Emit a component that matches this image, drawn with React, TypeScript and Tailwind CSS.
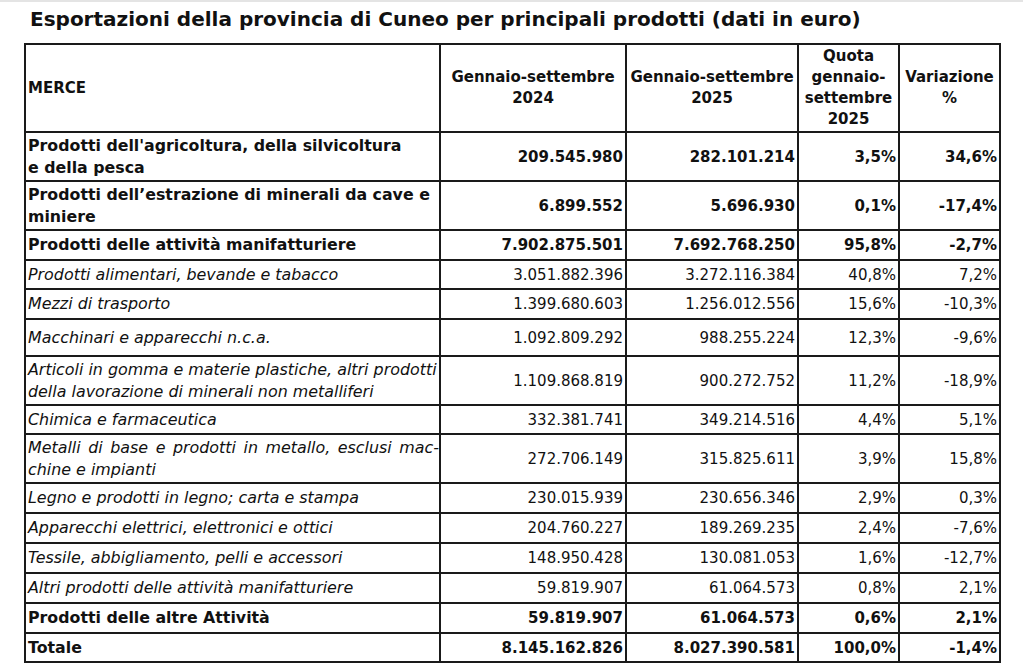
import React from 'react';

type Row = {
  label: React.ReactNode;
  a: string;
  b: string;
  q: string;
  v: string;
  kind: 'bold' | 'italic';
  h: string;
  justify?: boolean;
};

const rows: Row[] = [
  {
    label: (
      <>
        Prodotti dell'agricoltura, della silvicoltura
        <br />e della pesca
      </>
    ),
    a: '209.545.980',
    b: '282.101.214',
    q: '3,5%',
    v: '34,6%',
    kind: 'bold',
    h: 'h-[49px]',
  },
  {
    label: 'Prodotti dell’estrazione di minerali da cave e miniere',
    a: '6.899.552',
    b: '5.696.930',
    q: '0,1%',
    v: '-17,4%',
    kind: 'bold',
    h: 'h-[49px]',
  },
  { label: 'Prodotti delle attività manifatturiere', a: '7.902.875.501', b: '7.692.768.250', q: '95,8%', v: '-2,7%', kind: 'bold', h: 'h-[30px]' },
  { label: 'Prodotti alimentari, bevande e tabacco', a: '3.051.882.396', b: '3.272.116.384', q: '40,8%', v: '7,2%', kind: 'italic', h: 'h-[29px]' },
  { label: 'Mezzi di trasporto', a: '1.399.680.603', b: '1.256.012.556', q: '15,6%', v: '-10,3%', kind: 'italic', h: 'h-[30px]' },
  { label: 'Macchinari e apparecchi n.c.a.', a: '1.092.809.292', b: '988.255.224', q: '12,3%', v: '-9,6%', kind: 'italic', h: 'h-[37px]' },
  {
    label: (
      <>
        Articoli in gomma e materie plastiche, altri prodotti
        <br />
        della lavorazione di minerali non metalliferi
      </>
    ),
    a: '1.109.868.819',
    b: '900.272.752',
    q: '11,2%',
    v: '-18,9%',
    kind: 'italic',
    h: 'h-[49px]',
  },
  { label: 'Chimica e farmaceutica', a: '332.381.741', b: '349.214.516', q: '4,4%', v: '5,1%', kind: 'italic', h: 'h-[29px]' },
  {
    label: 'Metalli di base e prodotti in metallo, esclusi mac-chine e impianti',
    a: '272.706.149',
    b: '315.825.611',
    q: '3,9%',
    v: '15,8%',
    kind: 'italic',
    h: 'h-[49px]',
    justify: true,
  },
  { label: 'Legno e prodotti in legno; carta e stampa', a: '230.015.939', b: '230.656.346', q: '2,9%', v: '0,3%', kind: 'italic', h: 'h-[30px]' },
  { label: 'Apparecchi elettrici, elettronici e ottici', a: '204.760.227', b: '189.269.235', q: '2,4%', v: '-7,6%', kind: 'italic', h: 'h-[30px]' },
  { label: 'Tessile, abbigliamento, pelli e accessori', a: '148.950.428', b: '130.081.053', q: '1,6%', v: '-12,7%', kind: 'italic', h: 'h-[30px]' },
  { label: 'Altri prodotti delle attività manifatturiere', a: '59.819.907', b: '61.064.573', q: '0,8%', v: '2,1%', kind: 'italic', h: 'h-[30px]' },
  { label: 'Prodotti delle altre Attività', a: '59.819.907', b: '61.064.573', q: '0,6%', v: '2,1%', kind: 'bold', h: 'h-[30px]' },
  { label: 'Totale', a: '8.145.162.826', b: '8.027.390.581', q: '100,0%', v: '-1,4%', kind: 'bold', h: 'h-[29px]' },
];

export default function App() {
  return (
    <div className="min-h-[667px] bg-white border-t-2 border-[#e4e4e4] font-['DejaVu_Sans',Verdana,sans-serif] text-[#111]">
      <h1 className="pl-[30px] pt-[2px] h-[41px] text-[20px] font-bold">
        Esportazioni della provincia di Cuneo per principali prodotti (dati in euro)
      </h1>

      <table className="ml-[24px] w-[975px] border-collapse table-fixed text-[15px] leading-[22px]">
        <colgroup>
          <col className="w-[415px]" />
          <col className="w-[186px]" />
          <col className="w-[172px]" />
          <col className="w-[101px]" />
          <col className="w-[101px]" />
        </colgroup>
        <thead>
          <tr className="h-[88px] font-bold text-[15px] leading-[21px]">
            <th className="border-2 border-[#1a1a1a] px-[2px] text-left align-middle">MERCE</th>
            <th className="border-2 border-[#1a1a1a] px-[1px] text-center align-middle">
              Gennaio-settembre
              <br />
              2024
            </th>
            <th className="border-2 border-[#1a1a1a] px-[1px] text-center align-middle">
              Gennaio-settembre
              <br />
              2025
            </th>
            <th className="border-2 border-[#1a1a1a] px-[1px] text-center align-middle">
              Quota
              <br />
              gennaio-
              <br />
              settembre
              <br />
              2025
            </th>
            <th className="border-2 border-[#1a1a1a] px-[1px] text-center align-middle">
              Variazione
              <br />%
            </th>
          </tr>
        </thead>
        <tbody>
          {rows.map((r, i) => {
            const style = r.kind === 'bold' ? 'font-bold text-[15.8px]' : 'italic text-[15.9px]';
            const num = r.kind === 'bold' ? 'font-bold' : '';
            return (
              <tr key={i} className={r.h}>
                <td className={`border-2 border-[#1a1a1a] pl-[2px] pr-0 align-middle whitespace-normal ${style} ${r.justify ? 'text-justify' : 'text-left'}`}>
                  {r.label}
                </td>
                <td className={`border-2 border-[#1a1a1a] pr-[2px] text-right align-middle ${num}`}>{r.a}</td>
                <td className={`border-2 border-[#1a1a1a] pr-[2px] text-right align-middle ${num}`}>{r.b}</td>
                <td className={`border-2 border-[#1a1a1a] pr-[2px] text-right align-middle ${num}`}>{r.q}</td>
                <td className={`border-2 border-[#1a1a1a] pr-[2px] text-right align-middle ${num}`}>{r.v}</td>
              </tr>
            );
          })}
        </tbody>
      </table>

      <p className="pl-[28px] pt-[1px] text-[13px] italic text-[#666]">
        Fonte: elaborazione CCIAA di Cuneo su dati Istat
      </p>
    </div>
  );
}
